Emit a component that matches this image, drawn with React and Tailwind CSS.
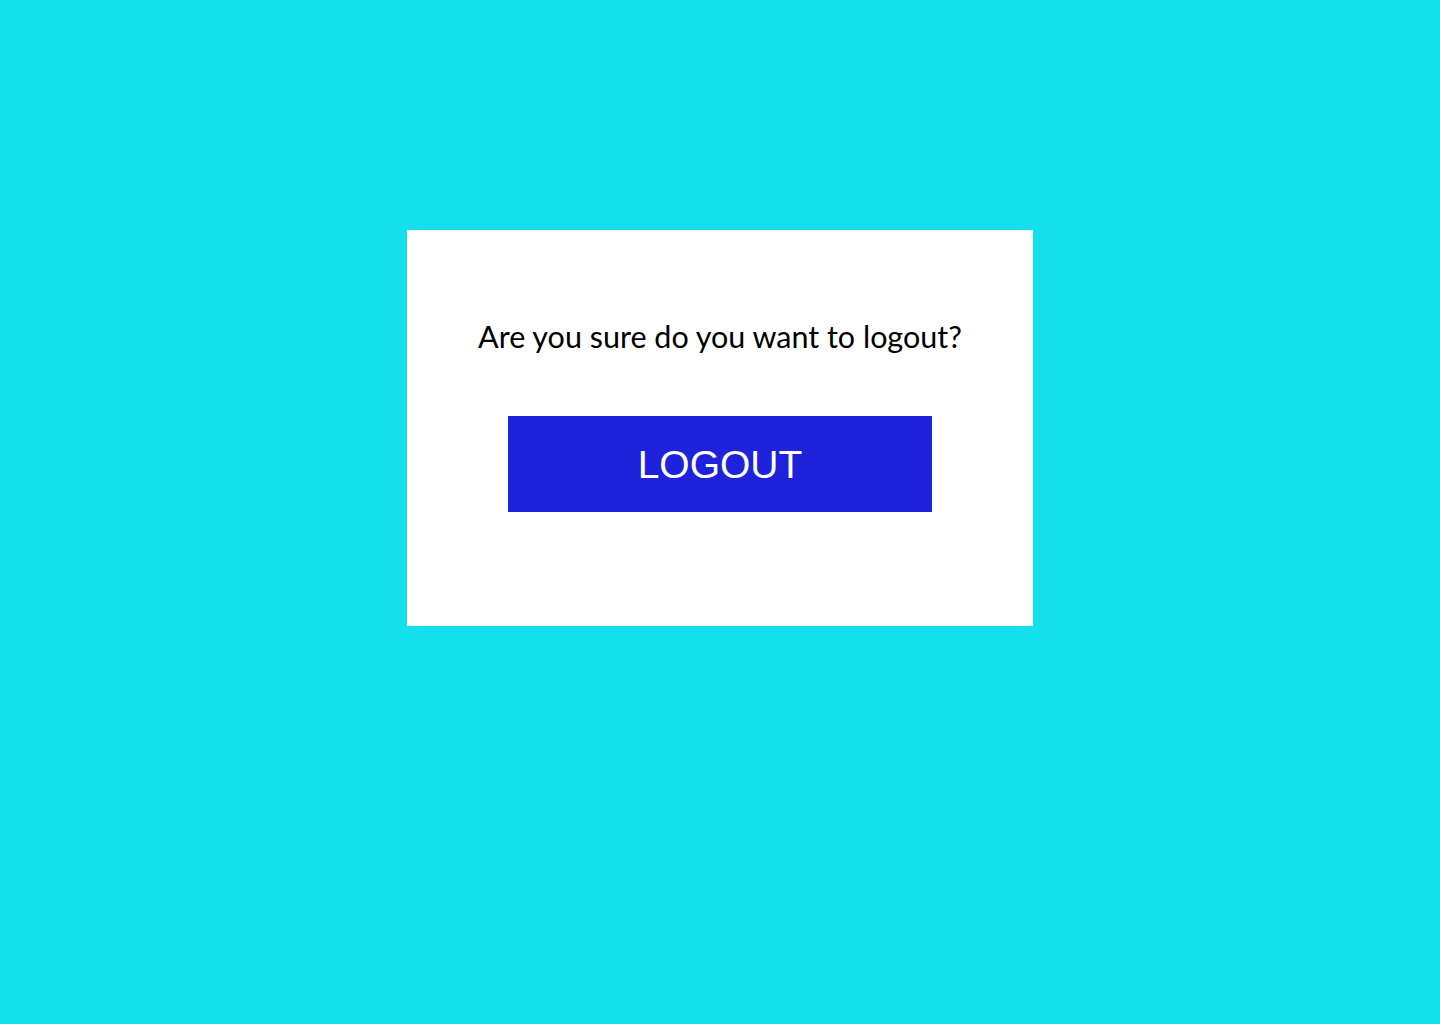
export default function App() {
  return (
    <div className="min-h-screen w-full bg-[#13e0ec] flex justify-center pt-[230px]">
      <div className="w-[626px] h-[396px] bg-white flex flex-col items-center pt-[86px]">
        <p className="text-[30.5px] leading-[40px] text-black font-['Lato',sans-serif]">
          Are you sure do you want to logout?
        </p>
        <button className="mt-[60px] w-[424px] h-[96px] bg-[#1e22da] text-white text-[39px] leading-none font-['Liberation_Sans',Arial,sans-serif]">
          LOGOUT
        </button>
      </div>
    </div>
  );
}
